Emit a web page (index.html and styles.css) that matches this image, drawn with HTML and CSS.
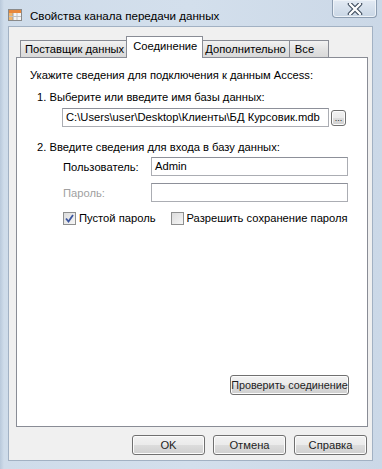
FILE: index.html
```html
<!DOCTYPE html>
<html lang="ru">
<head>
    <meta charset="UTF-8">
    <title>Свойства канала передачи данных</title>
    <link rel="stylesheet" href="styles.css">
</head>
<body>

<div class="window">
    <div class="titlebar">
        <svg class="app-icon" width="14" height="14" viewBox="0 0 14 14">
            <rect x="0.5" y="1.5" width="13" height="11" fill="#f4f4f4" stroke="#8a8a8a"/>
            <rect x="1" y="2" width="12" height="3" fill="#e8873a"/>
            <rect x="1" y="5" width="4" height="7" fill="#f2b56b"/>
            <line x1="5" y1="5" x2="5" y2="12" stroke="#a0a0a0"/>
            <line x1="9" y1="5" x2="9" y2="12" stroke="#c0c0c0"/>
            <line x1="1" y1="8.5" x2="13" y2="8.5" stroke="#c0c0c0"/>
        </svg>
        <span class="title">Свойства канала передачи данных</span>
        <div class="close">
            <svg width="16" height="12" viewBox="0 0 16 12">
                <path d="M3 1 L13 11 M13 1 L3 11" stroke="#3f4d5e" stroke-width="4.5" stroke-linecap="round"/>
                <path d="M3 1 L13 11 M13 1 L3 11" stroke="#ffffff" stroke-width="2.4" stroke-linecap="round"/>
            </svg>
        </div>
    </div>

    <div class="client">
        <div class="tabs">
            <div class="tab">Поставщик данных</div>
            <div class="tab active">Соединение</div>
            <div class="tab">Дополнительно</div>
            <div class="tab last">Все</div>
        </div>

        <div class="panel">
            <p class="heading">Укажите сведения для подключения к данным Access:</p>
            <p class="step">1. Выберите или введите имя базы данных:</p>
            <div class="file-row">
                <div class="field file">C:\Users\user\Desktop\Клиенты\БД Курсовик.mdb</div>
                <button class="btn browse">...</button>
            </div>
            <p class="step second">2. Введите сведения для входа в базу данных:</p>
            <div class="form-row">
                <span class="label">Пользователь:</span>
                <div class="field">Admin</div>
            </div>
            <div class="form-row">
                <span class="label disabled">Пароль:</span>
                <div class="field"></div>
            </div>
            <div class="checks">
                <label class="check">
                    <span class="box checked">
                        <svg width="9" height="9" viewBox="0 0 9 9">
                            <path d="M1 4.5 L3.5 7.5 L8 1" fill="none" stroke="#3c56a0" stroke-width="1.8"/>
                        </svg>
                    </span>
                    Пустой пароль
                </label>
                <label class="check">
                    <span class="box"></span>
                    Разрешить сохранение пароля
                </label>
            </div>
            <button class="btn test">Проверить соединение</button>
        </div>

        <div class="buttons">
            <button class="btn">OK</button>
            <button class="btn">Отмена</button>
            <button class="btn">Справка</button>
        </div>
    </div>
</div>

</body>
</html>
```

FILE: styles.css
```css
body {
    margin: 0;
    font-family: "Liberation Sans", Arial, sans-serif;
    font-size: 11.2px;
    color: #000;
    background: #c7d6e6;
}
.window {
    width: 382px;
    height: 469px;
    background: linear-gradient(to right, #b9c9db 0, #cfdcea 4px, #d3dfec 50%, #cbd8e7 100%);
    overflow: hidden;
}
.titlebar {
    height: 26px;
    display: flex;
    align-items: flex-start;
    padding-left: 8px;
}
.app-icon {
    margin-top: 8px;
    margin-right: 8px;
}
.title {
    margin-top: 9px;
    font-size: 11.6px;
    color: #000;
}
.close {
    margin-left: auto;
    margin-right: 5px;
    width: 43px;
    height: 17px;
    border: 1px solid #8c9db1;
    border-top: none;
    border-radius: 0 0 4px 4px;
    background: linear-gradient(#e2eaf3, #c9d6e5);
    box-shadow: inset 0 0 0 1px #eef3f8;
    display: flex;
    align-items: center;
    justify-content: center;
}
.client {
    margin-left: 8px;
    width: 365px;
    height: 435px;
    border: 1px solid #a2b1c3;
    background: #f0f0f0;
    padding: 9px 0 0 7px;
    box-sizing: border-box;
}
.tabs {
    display: flex;
    align-items: flex-end;
    height: 21px;
    padding-left: 5px;
}
.tab {
    height: 16px;
    line-height: 16px;
    padding: 0 3px 0 4px;
    border: 1px solid #898c95;
    border-bottom: none;
    margin-left: -1px;
    white-space: nowrap;
    background: linear-gradient(#f2f2f2, #e3e3e3 50%, #d9d9d9);
}
.tab.active {
    line-height: 19px;
    margin: 0 -2px -1px -2px;
    padding: 0 5px 0 6px;
    background: #fff;
    position: relative;
    z-index: 1;
    height: 21px;
}
.tab.last {
    padding: 0 14px 0 5px;
}
.panel {
    width: 352px;
    height: 370px;
    box-sizing: border-box;
    border: 1px solid #898c95;
    background: #fff;
    padding: 9px 18px 31px 13px;
    display: flex;
    flex-direction: column;
}
.heading, .step {
    margin: 0;
    line-height: 16px;
    white-space: nowrap;
}
.step {
    margin-top: 6px;
    padding-left: 7px;
}
.step.second {
    margin-top: 12px;
}
.file-row {
    display: flex;
    align-items: center;
    margin: 3px 0 0 32px;
}
.field {
    height: 19px;
    line-height: 17px;
    box-sizing: border-box;
    border: 1px solid #abadb3;
    border-top-color: #8d9099;
    background: #fff;
    padding: 0 3px;
    white-space: nowrap;
    overflow: hidden;
}
.field.file {
    width: 267px;
}
.form-row {
    display: flex;
    align-items: center;
    margin: 7px 0 0 33px;
}
.step + .form-row {
    margin-top: 2px;
}
.form-row .label {
    width: 88px;
}
.form-row .field {
    width: 197px;
}
.label.disabled {
    color: #a0a0a0;
}
.checks {
    display: flex;
    margin: 8px 0 0 33px;
    line-height: 16px;
    gap: 15px;
}
.check {
    display: flex;
    align-items: center;
    gap: 3px;
    white-space: nowrap;
}
.box {
    width: 13px;
    height: 13px;
    box-sizing: border-box;
    border: 1px solid #8e8f8f;
    background: linear-gradient(135deg, #dcdcdc, #f6f6f6);
    display: flex;
    align-items: center;
    justify-content: center;
}
.btn {
    font-family: inherit;
    font-size: 11.2px;
    font-weight: 400;
    color: #1e1e1e;
    height: 20px;
    padding: 0 3px;
    white-space: nowrap;
    border: 1px solid #707070;
    border-radius: 3px;
    background: linear-gradient(#f2f2f2 0, #ebebeb 50%, #dddddd 50%, #cfcfcf 100%);
    box-shadow: inset 0 0 0 1px #fcfcfc;
}
.btn.browse {
    width: 15px;
    height: 16px;
    margin-left: 2px;
    padding: 0;
    font-size: 9px;
    line-height: 10px;
}
.btn.test {
    margin-top: auto;
    align-self: flex-end;
    width: 119px;
    padding: 0;
    font-size: 10.8px;
}
.buttons {
    display: flex;
    justify-content: flex-end;
    gap: 8px;
    padding: 8px 5px 0 0;
}
.buttons .btn {
    width: 73px;
}
```
